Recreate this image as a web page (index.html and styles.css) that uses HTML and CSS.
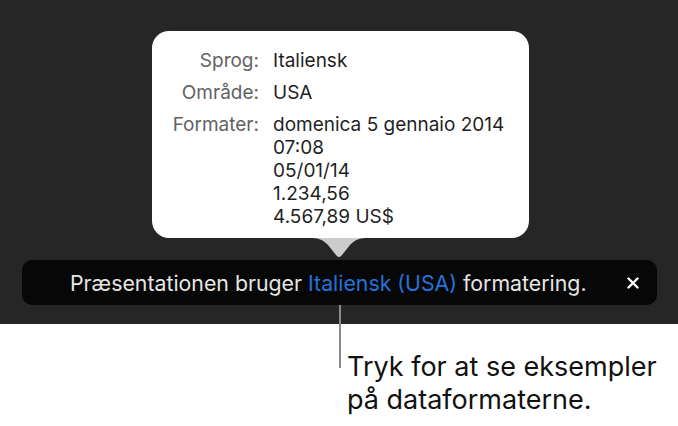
FILE: index.html
```html
<!DOCTYPE html>
<html lang="da">
<head>
<meta charset="utf-8">
<link rel="stylesheet" href="styles.css">
</head>
<body>
<div class="page">
  <div class="stage">
    <div class="popover">
      <div class="grid">
        <div class="label">Sprog:</div>
        <div class="value">Italiensk</div>
        <div class="label">Område:</div>
        <div class="value">USA</div>
        <div class="label">Formater:</div>
        <div class="value">domenica 5 gennaio 2014<br>07:08<br>05/01/14<br>1.234,56<br>4.567,89 US$</div>
      </div>
      <svg class="arrow" width="54" height="21" viewBox="0 0 54 21"><path d="M0 0 C8 0 12 3 16 7 L24 17 Q27 21 30 17 L38 7 C42 3 46 0 54 0 Z" fill="#cccccc"/></svg>
    </div>
    <div class="banner">
      <span class="msg">Præsentationen bruger <span class="link">Italiensk (USA)</span> formatering.</span>
      <svg class="close" width="12" height="12" viewBox="0 0 12 12"><path d="M1.5 1.5 L10.5 10.5 M10.5 1.5 L1.5 10.5" stroke="#ffffff" stroke-width="2.4" stroke-linecap="round"/></svg>
    </div>
  </div>
  <div class="callout">Tryk for at se eksempler<br>på dataformaterne.</div>
  <div class="leader"></div>
</div>
</body>
</html>
```
FILE: styles.css
```css
* { box-sizing: border-box; }
html, body { margin: 0; padding: 0; background: #ffffff; }
body { font-family: "Inter", "Liberation Sans", sans-serif; }
.page { position: relative; width: 678px; height: 426px; overflow: hidden; }
.stage {
  background: #262626;
  height: 324px;
  padding-top: 31px;
  display: flex;
  flex-direction: column;
}
.popover {
  position: relative;
  margin-left: 152px;
  width: 377px;
  height: 207px;
  background: #ffffff;
  border-radius: 17px;
  padding-top: 18px;
}
.grid {
  display: grid;
  grid-template-columns: 107px auto;
  column-gap: 14px;
  row-gap: 9px;
  font-size: 19px;
  line-height: 23px;
}
.label { text-align: right; color: #636363; }
.value { color: #1f1f1f; }
.arrow { position: absolute; left: 160px; top: 207px; display: block; }
.banner {
  margin: 22px 21px 0 22px;
  height: 45px;
  background: #070707;
  border-radius: 10px;
  display: flex;
  align-items: center;
  padding: 0 18px 0 48px;
  color: #e6e6e6;
  font-size: 21.3px;
}
.link { color: #2472dc; }
.close { margin-left: auto; display: block; }
.callout {
  margin: 26px 0 0 347px;
  font-size: 27px;
  line-height: 33px;
  color: #111111;
}
.leader {
  position: absolute;
  left: 339px;
  top: 305px;
  width: 2px;
  height: 63px;
  background: #8c8c8c;
}
```
